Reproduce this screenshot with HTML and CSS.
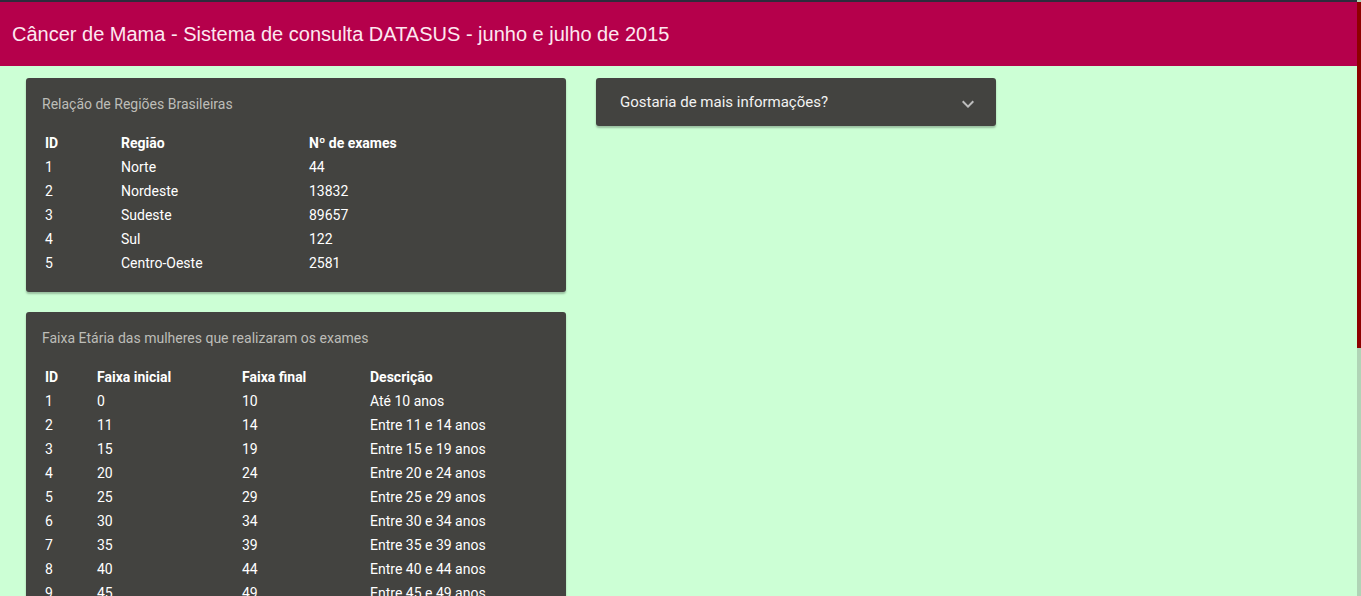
FILE: index.html
```html
<!DOCTYPE html>
<html lang="pt-BR">
<head>
<meta charset="utf-8">
<title>Câncer de Mama - DATASUS</title>
<link rel="stylesheet" href="styles.css">
</head>
<body>
<div class="topline"></div>
<header class="appbar">
  <h1 class="appbar-title">Câncer de Mama - Sistema de consulta DATASUS - junho e julho de 2015</h1>
</header>
<main class="content">
  <section class="column left">
    <div class="card">
      <div class="card-title">Relação de Regiões Brasileiras</div>
      <table class="data regions">
        <colgroup><col class="c1"><col class="c2"><col></colgroup>
        <thead><tr><th>ID</th><th>Região</th><th>Nº de exames</th></tr></thead>
        <tbody>
          <tr><td>1</td><td>Norte</td><td>44</td></tr>
          <tr><td>2</td><td>Nordeste</td><td>13832</td></tr>
          <tr><td>3</td><td>Sudeste</td><td>89657</td></tr>
          <tr><td>4</td><td>Sul</td><td>122</td></tr>
          <tr><td>5</td><td>Centro-Oeste</td><td>2581</td></tr>
        </tbody>
      </table>
    </div>
    <div class="card">
      <div class="card-title">Faixa Etária das mulheres que realizaram os exames</div>
      <table class="data ages">
        <colgroup><col class="a1"><col class="a2"><col class="a3"><col></colgroup>
        <thead><tr><th>ID</th><th>Faixa inicial</th><th>Faixa final</th><th>Descrição</th></tr></thead>
        <tbody>
          <tr><td>1</td><td>0</td><td>10</td><td>Até 10 anos</td></tr>
          <tr><td>2</td><td>11</td><td>14</td><td>Entre 11 e 14 anos</td></tr>
          <tr><td>3</td><td>15</td><td>19</td><td>Entre 15 e 19 anos</td></tr>
          <tr><td>4</td><td>20</td><td>24</td><td>Entre 20 e 24 anos</td></tr>
          <tr><td>5</td><td>25</td><td>29</td><td>Entre 25 e 29 anos</td></tr>
          <tr><td>6</td><td>30</td><td>34</td><td>Entre 30 e 34 anos</td></tr>
          <tr><td>7</td><td>35</td><td>39</td><td>Entre 35 e 39 anos</td></tr>
          <tr><td>8</td><td>40</td><td>44</td><td>Entre 40 e 44 anos</td></tr>
          <tr><td>9</td><td>45</td><td>49</td><td>Entre 45 e 49 anos</td></tr>
        </tbody>
      </table>
    </div>
  </section>
  <section class="column right">
    <div class="accordion">
      <span class="accordion-label">Gostaria de mais informações?</span>
      <svg class="chevron" width="24" height="24" viewBox="0 0 24 24"><path d="M7.41 8.59 12 13.17l4.59-4.58L18 10l-6 6-6-6z" fill="currentColor"/></svg>
    </div>
  </section>
</main>
<div class="scrolltrack"><div class="scrollthumb"></div></div>
</body>
</html>
```
FILE: styles.css
```css
html, body {
  margin: 0;
  padding: 0;
}
body {
  background: #ccffd5;
  font-family: Roboto, "Noto Sans", sans-serif;
  overflow: hidden;
  height: 596px;
}
.topline {
  height: 2px;
  background: #2e2b3c;
  margin-right: 4px;
}
.appbar {
  height: 64px;
  background: #b5004b;
  display: flex;
  align-items: center;
  padding-left: 12px;
  margin-right: 4px;
}
.appbar-title {
  margin: 0;
  font-family: "Liberation Sans", Arial, sans-serif;
  font-weight: normal;
  font-size: 20px;
  color: #fde8f0;
  letter-spacing: 0;
}
.content {
  display: flex;
  align-items: flex-start;
  gap: 30px;
  padding: 12px 0 0 26px;
}
.column {
  display: flex;
  flex-direction: column;
  gap: 20px;
}
.left { width: 540px; }
.right { width: 400px; }
.card {
  background: #434340;
  border-radius: 3px;
  box-shadow: 0 2px 2px rgba(0,0,0,0.25);
  padding: 16px 16px 17px;
}
.card-title {
  font-size: 14px;
  line-height: 20px;
  color: #bdbdb8;
  margin-bottom: 17px;
}
.data {
  border-collapse: collapse;
  color: #ffffff;
  font-size: 14px;
}
.data th, .data td {
  padding: 0 3px;
  height: 24px;
  line-height: 24px;
  text-align: left;
  white-space: nowrap;
}
.data th { font-weight: bold; }
.regions .c1 { width: 76px; }
.regions .c2 { width: 188px; }
.ages .a1 { width: 52px; }
.ages .a2 { width: 145px; }
.ages .a3 { width: 128px; }
.accordion {
  background: #434340;
  border-radius: 3px;
  box-shadow: 0 2px 2px rgba(0,0,0,0.25);
  height: 48px;
  box-sizing: border-box;
  padding: 0 16px 0 24px;
  display: flex;
  align-items: center;
  justify-content: space-between;
}
.accordion-label {
  font-size: 15px;
  color: #f2f2f2;
}
.chevron {
  color: #bdbdbd;
  margin-top: 4px;
}
.scrolltrack {
  position: fixed;
  top: 0;
  right: 0;
  width: 4px;
  height: 100%;
  background: #b0d4b6;
}
.scrollthumb {
  margin-top: 2px;
  height: 346px;
  background: #8e0000;
}
```
